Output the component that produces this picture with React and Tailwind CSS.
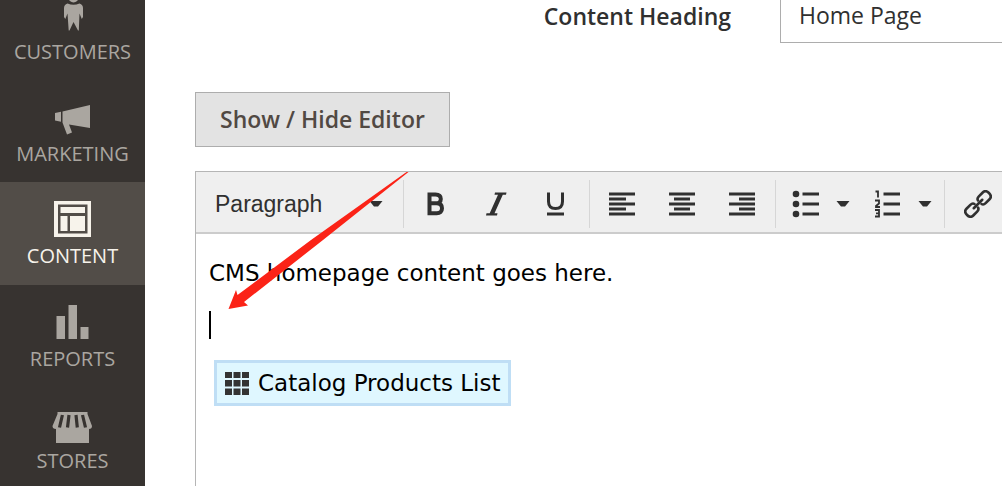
const MENU = [
  { label: 'Customers', icon: CustomersIcon },
  { label: 'Marketing', icon: MarketingIcon },
  { label: 'Content', icon: ContentIcon, active: true },
  { label: 'Reports', icon: ReportsIcon },
  { label: 'Stores', icon: StoresIcon },
];

function CustomersIcon() {
  return (
    <svg width="41" height="42" viewBox="0 0 41 42" fill="currentColor" aria-hidden="true">
      <circle cx="21.500" cy="4.500" r="5" />
      <path d="M15.500 10.500 Q21.500 13 27.500 10.500 Q31 11.500 31 15 V24 L29.800 26 L27.500 20.500 L26.800 37.500 H26 L21.500 29 L17.500 37.500 H16.700 L15.500 20.500 L13.300 26 L12 24 V15 Q12 11.500 15.500 10.500Z" />
    </svg>
  );
}

function MarketingIcon() {
  return (
    <svg width="41" height="42" viewBox="0 0 41 42" fill="currentColor" aria-hidden="true">
      <path d="M3 18 L9 16.800 V26.800 L3 25.500Z" />
      <path d="M10.500 16.500 L38 10 V33 L17 29.500 L20 37.500 L15 39.500 L10.500 27.500Z" />
    </svg>
  );
}

function ContentIcon() {
  return (
    <svg width="41" height="42" viewBox="0 0 41 42" aria-hidden="true">
      <path fill="currentColor" fillRule="evenodd" d="M2 4H39V40H2Z M6 7.500V36.500H35.500V7.500Z" />
      <path fill="currentColor" d="M8.500 10H33V16H8.500Z M8.500 19H15.500V34H8.500Z M18 19H33V34H18Z" />
    </svg>
  );
}

function ReportsIcon() {
  return (
    <svg width="41" height="42" viewBox="0 0 41 42" fill="currentColor" aria-hidden="true">
      <path d="M4.500 16H13V39H4.500Z M16.500 5H25V39H16.500Z M28.500 27H36.500V39H28.500Z" />
    </svg>
  );
}

function StoresIcon() {
  return (
    <svg width="41" height="42" viewBox="0 0 41 42" aria-hidden="true">
      <path fill="currentColor" d="M5.500 10H35.500V12L40 24Q40 27 37 27V41H4V27Q0.500 27 0.500 24L5.500 12Z" />
      <path fill="none" stroke="#373330" strokeWidth="3.200" d="M10.400 13L7.500 25.500M17 13L15.500 25.500M24 13L25.300 25.500M30.500 13L33.500 25.500" />
    </svg>
  );
}

function BoldIcon() {
  return (
    <svg width="28" height="28" viewBox="0 0 28 28" aria-hidden="true">
      <path fill="none" stroke="currentColor" strokeWidth="4" d="M7.500 4.500H13.500Q18.800 4.500 18.800 9T13.500 13.300H7.500H14.500Q20 13.300 20 18.300T14.500 23.200H7.500V2.500" />
    </svg>
  );
}

function ItalicIcon() {
  return (
    <svg width="28" height="28" viewBox="0 0 28 28" fill="currentColor" aria-hidden="true">
      <path d="M13 2.500H24.500L24 4.800H20.800L12.500 23.200H15.500L15 25.500H4L4.500 23.200H7.700L16 4.800H12.500Z" />
    </svg>
  );
}

function UnderlineIcon() {
  return (
    <svg width="28" height="28" viewBox="0 0 28 28" aria-hidden="true">
      <path fill="none" stroke="currentColor" strokeWidth="3" d="M6.500 2.500V11.500Q6.500 18.500 13.500 18.500T20.500 11.500V2.500M5 24H22" />
    </svg>
  );
}

const ALIGN_PATHS = {
  left: 'M1 4H27M1 9H18M1 14H27M1 19H18M1 24H27',
  center: 'M1 4H27M6 9H22M1 14H27M6 19H22M1 24H27',
  right: 'M1 4H27M11 9H27M1 14H27M11 19H27M1 24H27',
};

function AlignIcon({ side }) {
  return (
    <svg width="28" height="28" viewBox="0 0 28 28" aria-hidden="true">
      <path fill="none" stroke="currentColor" strokeWidth="3.200" d={ALIGN_PATHS[side]} />
    </svg>
  );
}

function BulletIcon() {
  return (
    <svg width="28" height="28" viewBox="0 0 28 28" aria-hidden="true">
      <g fill="currentColor">
        <circle cx="4" cy="4" r="3.300" />
        <circle cx="4" cy="14" r="3.300" />
        <circle cx="4" cy="24" r="3.300" />
      </g>
      <path fill="none" stroke="currentColor" strokeWidth="3" d="M10.500 4H27M10.500 14H27M10.500 24H27" />
    </svg>
  );
}

function NumberIcon() {
  return (
    <svg width="28" height="28" viewBox="0 0 28 28" aria-hidden="true">
      <path fill="none" stroke="currentColor" strokeWidth="3" d="M9.500 4H26M9.500 14H26M9.500 24H26" />
      <path fill="none" stroke="currentColor" strokeWidth="1.800" d="M1.500 1.500H4V7.500M1 10.500H5V13.500L2 16V17H6M1 20H5V26.500H1M2 23.300H5" />
    </svg>
  );
}

function LinkIcon() {
  return (
    <svg width="28" height="28" viewBox="0 0 28 28" aria-hidden="true">
      <g transform="rotate(-45 14 14)" fill="none" stroke="currentColor" strokeWidth="2.600" strokeLinecap="round">
        <path d="M11.500 16.500Q11 18.800 8 18.800H2.500Q-1.500 18.800 -1.500 14T2.500 9.200H8Q11 9.200 11.500 11.500" />
        <path d="M16.500 11.500Q17 9.200 20 9.200H25.500Q29.500 9.200 29.500 14T25.500 18.800H20Q17 18.800 16.500 16.500" />
        <path d="M8 14H20" />
      </g>
    </svg>
  );
}

function Caret() {
  return (
    <svg width="14" height="8" viewBox="0 0 14 8" fill="currentColor" aria-hidden="true">
      <path d="M0.500 1H13.500L9 6.500H5Z" />
    </svg>
  );
}

function ToolButton({ label, children }) {
  return (
    <button type="button" aria-label={label} className="flex h-12 w-15 items-center justify-center">
      {children}
    </button>
  );
}

function ListButton({ label, children }) {
  return (
    <button type="button" aria-label={label} className="flex h-12 items-center gap-4 px-1">
      {children}
      <Caret />
    </button>
  );
}

function Sidebar() {
  return (
    <nav aria-label="Main" className="w-[145px] shrink-0 bg-[#373330]">
      <ul className="-mt-[22px]">
        {MENU.map(({ label, icon: Icon, active }) => (
          <li key={label} className={active ? 'border-b border-[#524d48]' : ''}>
            <a
              href="#"
              aria-current={active ? 'page' : undefined}
              className={
                'flex h-[102px] flex-col items-center pt-[15px] ' +
                (active ? 'bg-[#524d48] text-[#f7f3eb]' : 'text-[#aaa6a0]')
              }
            >
              <Icon />
              <span className="mt-0.5 text-[20px] leading-[30px] uppercase">{label}</span>
            </a>
          </li>
        ))}
      </ul>
    </nav>
  );
}

function Toolbar() {
  return (
    <div
      role="toolbar"
      aria-label="Formatting"
      className="flex h-[62px] items-center border-b-2 border-[#ccc] bg-[#efefef] pt-1 text-[#303030]"
    >
      <button
        type="button"
        className="flex h-12 w-[208px] shrink-0 items-center justify-between border-r border-[#d6d6d6] pr-5 pl-[19px] font-['Liberation_Sans',sans-serif] text-[23px]"
      >
        Paragraph
        <Caret />
      </button>
      <div className="flex shrink-0 border-r border-[#d6d6d6] pr-[3px] pl-0.5">
        <ToolButton label="Bold"><BoldIcon /></ToolButton>
        <ToolButton label="Italic"><ItalicIcon /></ToolButton>
        <ToolButton label="Underline"><UnderlineIcon /></ToolButton>
      </div>
      <div className="flex shrink-0 border-r border-[#d6d6d6] pr-[3px] pl-0.5">
        <ToolButton label="Align left"><AlignIcon side="left" /></ToolButton>
        <ToolButton label="Align center"><AlignIcon side="center" /></ToolButton>
        <ToolButton label="Align right"><AlignIcon side="right" /></ToolButton>
      </div>
      <div className="flex shrink-0 gap-4 border-r border-[#d6d6d6] pr-2 pl-3">
        <ListButton label="Bullet list"><BulletIcon /></ListButton>
        <ListButton label="Numbered list"><NumberIcon /></ListButton>
      </div>
      <div className="flex shrink-0 px-[3px]">
        <ToolButton label="Insert link"><LinkIcon /></ToolButton>
      </div>
    </div>
  );
}

function Editor() {
  return (
    <section aria-label="Editor" className="relative mt-6 grow border-t border-l border-[#b5b5b5]">
      <Toolbar />
      <div className="px-[13px] pt-[23px] font-['DejaVu_Sans',sans-serif] text-[23px] leading-[32px] text-black">
        <p>CMS homepage content goes here.</p>
        <p className="mt-5 flex h-8 items-center">
          <span className="h-7 w-[2px] bg-black" />
        </p>
        <div className="mt-[19px] ml-[5px] flex h-[46px] w-fit items-center gap-[9px] border-3 border-[#bfdef5] bg-[#dff7ff] px-2">
          <svg width="24" height="24" viewBox="0 0 24 24" fill="#333" aria-hidden="true">
            <path d="M0 1H7V7H0Z M8.500 1H15.500V7H8.500Z M17 1H24V7H17Z M0 9H7V15.500H0Z M8.500 9H15.500V15.500H8.500Z M17 9H24V15.500H17Z M0 17.500H7V24H0Z M8.500 17.500H15.500V24H8.500Z M17 17.500H24V24H17Z" />
          </svg>
          Catalog Products List
        </div>
      </div>
      <svg
        width="182"
        height="140"
        viewBox="0 0 182 140"
        fill="#fb2317"
        aria-hidden="true"
        className="pointer-events-none absolute top-0 left-8"
      >
        <path d="M178.500 0H180.500L95 68L16 130L20 133.500L0.500 137L8 118L9.500 123L83 68Z" />
      </svg>
    </section>
  );
}

export default function App() {
  return (
    <div className="flex h-screen overflow-hidden bg-white font-['Open_Sans',sans-serif]">
      <Sidebar />
      <main className="flex min-w-0 grow flex-col overflow-hidden pl-[50px]">
        <div className="-mt-3 flex h-[55px] shrink-0">
          <label htmlFor="heading" className="w-[536px] shrink-0 pt-3 text-right text-[23px] leading-[32px] font-semibold text-[#303030]">
            Content Heading
          </label>
          <input
            id="heading"
            type="text"
            defaultValue="Home Page"
            className="ml-[49px] w-0 grow border border-r-0 border-[#adadad] px-[18px] text-[23px] text-[#303030] outline-none"
          />
        </div>
        <button
          type="button"
          className="mt-[49px] h-[55px] w-fit shrink-0 border border-[#adadad] bg-[#e3e3e3] px-6 text-[23px] font-semibold text-[#514943]"
        >
          Show / Hide Editor
        </button>
        <Editor />
      </main>
    </div>
  );
}
